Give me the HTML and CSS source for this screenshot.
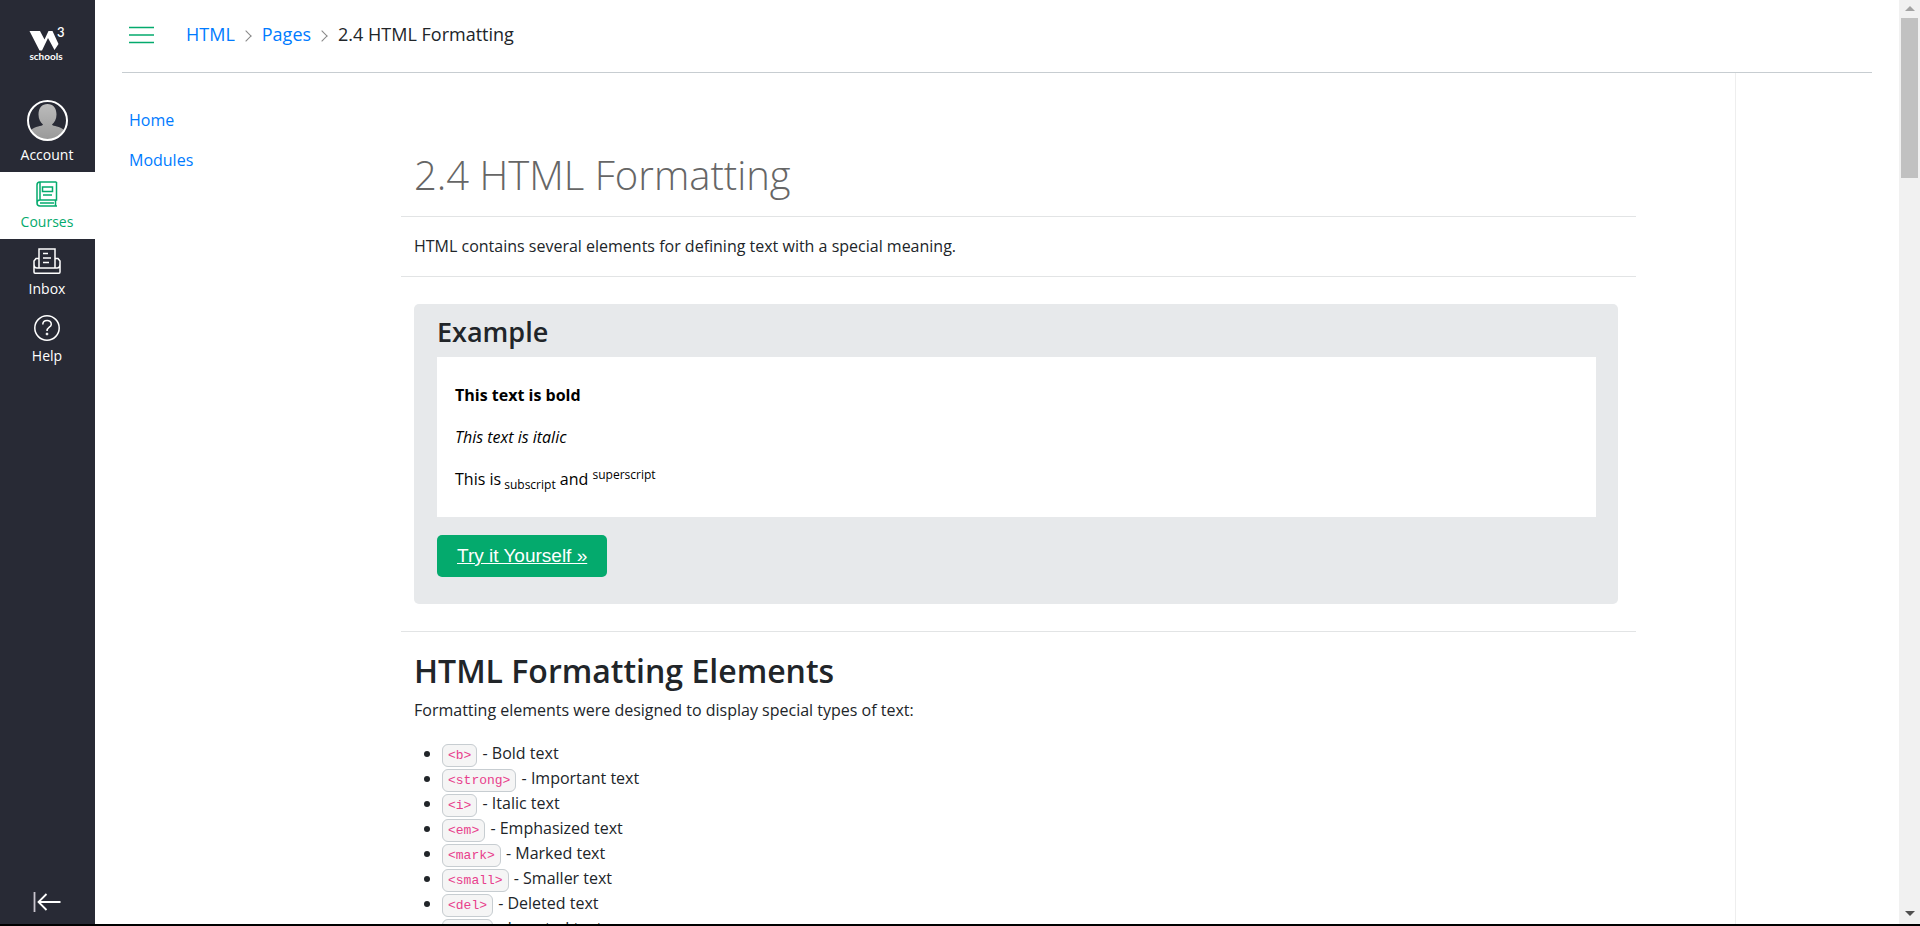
FILE: index.html
```html
<!DOCTYPE html>
<html lang="en">
<head>
  <meta charset="UTF-8" />
  <meta name="viewport" content="width=device-width, initial-scale=1" />
  <title>2.4 HTML Formatting</title>
  <link rel="stylesheet" href="styles.css">
</head>
<body>

  <nav class="sidebar">
    <a href="#" class="logo" aria-label="W3Schools">
      <svg width="38" height="38" viewBox="0 0 38 38" fill="#fff">
        <path d="M1.500 4H12L16.500 12.500L20.500 4H24.500L30.500 17L26.500 23L20 11L14 23.500H11.500Z" />
        <text x="29" y="10" class="logo-three">3</text>
        <text x="18" y="33" class="logo-name">schools</text>
      </svg>
    </a>
    <a href="#" class="side-link account">
      <svg width="41" height="41" viewBox="0 0 41 41">
        <defs>
          <linearGradient id="person" x1="0" y1="0" x2="0" y2="1">
            <stop offset="0" stop-color="#bbb" />
            <stop offset="1" stop-color="#999" />
          </linearGradient>
        </defs>
        <path fill="url(#person)" d="M20.500 4C26 4 29.500 8 29.500 14.500C29.500 19 27.500 22.500 25 24.500C26 26.500 33 26 37 30C34 36 28 40 20.500 40S7 36 4 30C8 26 15 26.500 16 24.500C13.500 22.500 11.500 19 11.500 14.500C11.500 8 15 4 20.500 4Z" />
        <circle cx="20.500" cy="20.500" r="19.500" fill="none" stroke="#fff" stroke-width="2" />
      </svg>
      <span>Account</span>
    </a>
    <a href="#" class="side-link active">
      <svg width="26" height="26" viewBox="0 0 26 26" fill="none" stroke="currentColor" stroke-width="1.500">
        <path d="M22.500 1H6C3.500 1 3 2.500 3 4V22C3 24 4 25 6 25H23M22.500 1V19H6C4 19 3 20.500 3 22M21.500 19V25M6 1.500V19M6 22H20" />
        <path d="M8.500 6H18.500V10.500H8.500ZM9 14H18" />
      </svg>
      <span>Courses</span>
    </a>
    <a href="#" class="side-link">
      <svg width="28" height="26" viewBox="0 0 28 26" fill="none" stroke="currentColor" stroke-width="1.500">
        <path d="M6 20V1H22V20" />
        <path d="M6 10.500H3L1 13V24C1 25 1.500 25.200 2 25.200H26C27 25.200 27 25 27 24V13L25 10.500H22M1 16C1 19 2 20 4 20H24C26 20 27 19 27 16" />
        <path d="M10 5.500H15M10 10H18M10 14.500H16" />
      </svg>
      <span>Inbox</span>
    </a>
    <a href="#" class="side-link">
      <svg width="28" height="26" viewBox="0 0 28 26" fill="none" stroke="currentColor" stroke-width="1.500">
        <circle cx="14" cy="13" r="12.200" />
        <path d="M9.800 9.500C9.800 4.200 18.300 4.200 18.300 9.200C18.300 12.500 14 12 14 16" />
        <circle cx="14" cy="19" r="1" fill="currentColor" stroke-width=".8" />
      </svg>
      <span>Help</span>
    </a>
    <button class="collapse-btn" aria-label="Minimize navigation">
      <svg width="28" height="20" viewBox="0 0 28 20" fill="none" stroke="#fff" stroke-width="1.800">
        <path d="M1.500 0V20" stroke="#c8c4ce" />
        <path d="M27.500 10H5M13.500 2L5.500 10L13.500 18" />
      </svg>
    </button>
  </nav>

  <div class="page">
    <header class="topbar">
      <button class="menu-btn" aria-label="Toggle course menu">
        <svg width="25" height="18" viewBox="0 0 25 18" stroke="#04aa6d" stroke-width="1.500">
          <path d="M0 1.500H25M0 9H25M0 16.500H25" />
        </svg>
      </button>
      <ol class="breadcrumbs">
        <li><a href="#">HTML</a></li>
        <li><a href="#">Pages</a></li>
        <li>2.4 HTML Formatting</li>
      </ol>
    </header>

    <div class="columns">
      <nav class="course-nav">
        <a href="#">Home</a>
        <a href="#">Modules</a>
      </nav>

      <main class="content">
        <h1>2.4 HTML Formatting</h1>
        <hr>
        <p class="intro">HTML contains several elements for defining text with a special meaning.</p>
        <hr>

        <section class="example">
          <h3>Example</h3>
          <div class="code-result">
            <p><b>This text is bold</b></p>
            <p><i>This text is italic</i></p>
            <p>This is<sub> subscript</sub> and <sup>superscript</sup></p>
          </div>
          <a href="#" class="try-btn">Try it Yourself »</a>
        </section>

        <hr>
        <h2>HTML Formatting Elements</h2>
        <p class="lead">Formatting elements were designed to display special types of text:</p>
        <ul class="elements">
          <li><code>&lt;b&gt;</code> - Bold text</li>
          <li><code>&lt;strong&gt;</code> - Important text</li>
          <li><code>&lt;i&gt;</code> - Italic text</li>
          <li><code>&lt;em&gt;</code> - Emphasized text</li>
          <li><code>&lt;mark&gt;</code> - Marked text</li>
          <li><code>&lt;small&gt;</code> - Smaller text</li>
          <li><code>&lt;del&gt;</code> - Deleted text</li>
          <li><code>&lt;ins&gt;</code> - Inserted text</li>
        </ul>
      </main>

      <aside class="right-side"></aside>
    </div>
  </div>

  <div class="scrollbar" aria-hidden="true">
    <span class="arrow up"></span>
    <span class="thumb"></span>
    <span class="arrow down"></span>
  </div>

</body>
</html>
```
FILE: styles.css
```css
* {
  box-sizing: border-box;
}

body {
  margin: 0;
  height: 100vh;
  display: flex;
  overflow: hidden;
  border-bottom: 2px solid #000;
  background-color: #fff;
  color: #212529;
  font-family: "Segoe UI", "Open Sans", "Noto Sans", sans-serif;
  font-size: 16px;
  line-height: 25px;
}

a {
  color: #007bff;
  text-decoration: none;
}

button {
  padding: 0;
  border: none;
  background: none;
  cursor: pointer;
}

svg {
  display: block;
  overflow: visible;
}

/* Global navigation */
.sidebar {
  flex: none;
  width: 95px;
  padding-right: 1px;
  display: flex;
  flex-direction: column;
  align-items: center;
  background-color: #282a35;
}

.logo {
  margin: 27px 0 31px;
}

.logo-three {
  font: 600 13px "Lato", sans-serif;
}

.logo-name {
  font: 700 10px "Lato", sans-serif;
  text-anchor: middle;
}

.side-link {
  width: 95px;
  height: 67px;
  margin-right: -1px;
  padding: 9px 1px 0 0;
  display: flex;
  flex-direction: column;
  align-items: center;
  gap: 5px;
  color: #fff;
  font-size: 14px;
  line-height: 20px;
}

.side-link.account {
  height: 76px;
  padding-top: 4px;
  gap: 4px;
}

.side-link.active {
  background-color: #fff;
  color: #04aa6d;
}

.collapse-btn {
  margin: auto 0 12px;
}

/* Page */
.page {
  flex: 1;
  min-width: 0;
  padding: 0 27px;
  display: flex;
  flex-direction: column;
}

.topbar {
  flex: none;
  height: 73px;
  padding: 0 7px 3px;
  display: flex;
  align-items: center;
  gap: 32px;
  border-bottom: 1px solid #c7cdd1;
}

.breadcrumbs {
  margin: 0;
  padding: 0;
  display: flex;
  list-style: none;
  font-size: 18px;
}

.breadcrumbs li + li::before {
  content: "";
  display: inline-block;
  width: 7px;
  height: 7px;
  margin: 0 12px 1px 7px;
  border: solid #888;
  border-width: 1px 1px 0 0;
  transform: rotate(45deg);
}

.columns {
  flex: 1;
  min-height: 0;
  display: flex;
}

.course-nav {
  flex: none;
  width: 279px;
  padding: 35px 7px;
  display: flex;
  flex-direction: column;
  gap: 15px;
}

.content {
  flex: 1;
  min-width: 0;
  padding: 0 99px 0 0;
  overflow: hidden;
  border-right: 1px solid #eee;
}

.right-side {
  flex: none;
  width: 136px;
}

h1,
h2,
h3,
p {
  margin: 0;
}

.content > h1,
.content > h2,
.content > p {
  padding: 0 13px;
}

hr {
  margin: 0;
  border: none;
  border-top: 1px solid #e2e4e5;
}

h1 {
  margin: 76px 0 15px;
  color: #666;
  font-size: 40px;
  font-weight: 300;
  line-height: 52px;
}

.intro {
  margin: 17px 0;
}

.example {
  margin: 27px 18px 27px 13px;
  padding: 8px 22px 27px 23px;
  border-radius: 5px;
  background-color: #e7e9eb;
}

.example h3 {
  margin-bottom: 5px;
  font-size: 27px;
  font-weight: 600;
  line-height: 40px;
}

.code-result {
  margin-bottom: 18px;
  padding: 26px 18px 25px;
  display: flex;
  flex-direction: column;
  gap: 17px;
  background-color: #fff;
  color: #000;
}

.code-result sub,
.code-result sup {
  font-size: 12px;
  line-height: 0;
}

.try-btn {
  display: inline-block;
  padding: 8px 20px 9px;
  border-radius: 5px;
  background-color: #04aa6d;
  color: #fff;
  font-family: "Liberation Sans", Arial, sans-serif;
  font-size: 19px;
  text-decoration: underline;
}

h2 {
  margin: 18px 0 6px;
  font-size: 32px;
  font-weight: 600;
  line-height: 42px;
}

.elements {
  margin: 18px 0 0;
  padding-left: 41px;
}

code {
  margin-right: 1px;
  padding: 3px 5px;
  border: 1px solid #c7cdd1;
  border-radius: 6px;
  background-color: #f5f5f5;
  color: #e83e8c;
  font-family: Consolas, "Liberation Mono", monospace;
  font-size: 13px;
  line-height: 1;
}

/* Window scrollbar */
.scrollbar {
  flex: none;
  width: 21px;
  padding: 6px 2px 8px;
  display: flex;
  flex-direction: column;
  align-items: center;
  background-color: #f1f1f1;
}

.arrow {
  border: 5px solid transparent;
}

.arrow.up {
  border-top: none;
  border-bottom-color: #a3a3a3;
}

.arrow.down {
  margin-top: auto;
  border-bottom: none;
  border-top-color: #505050;
}

.thumb {
  width: 17px;
  height: 160px;
  margin-top: 7px;
  background-color: #c1c1c1;
}
```
